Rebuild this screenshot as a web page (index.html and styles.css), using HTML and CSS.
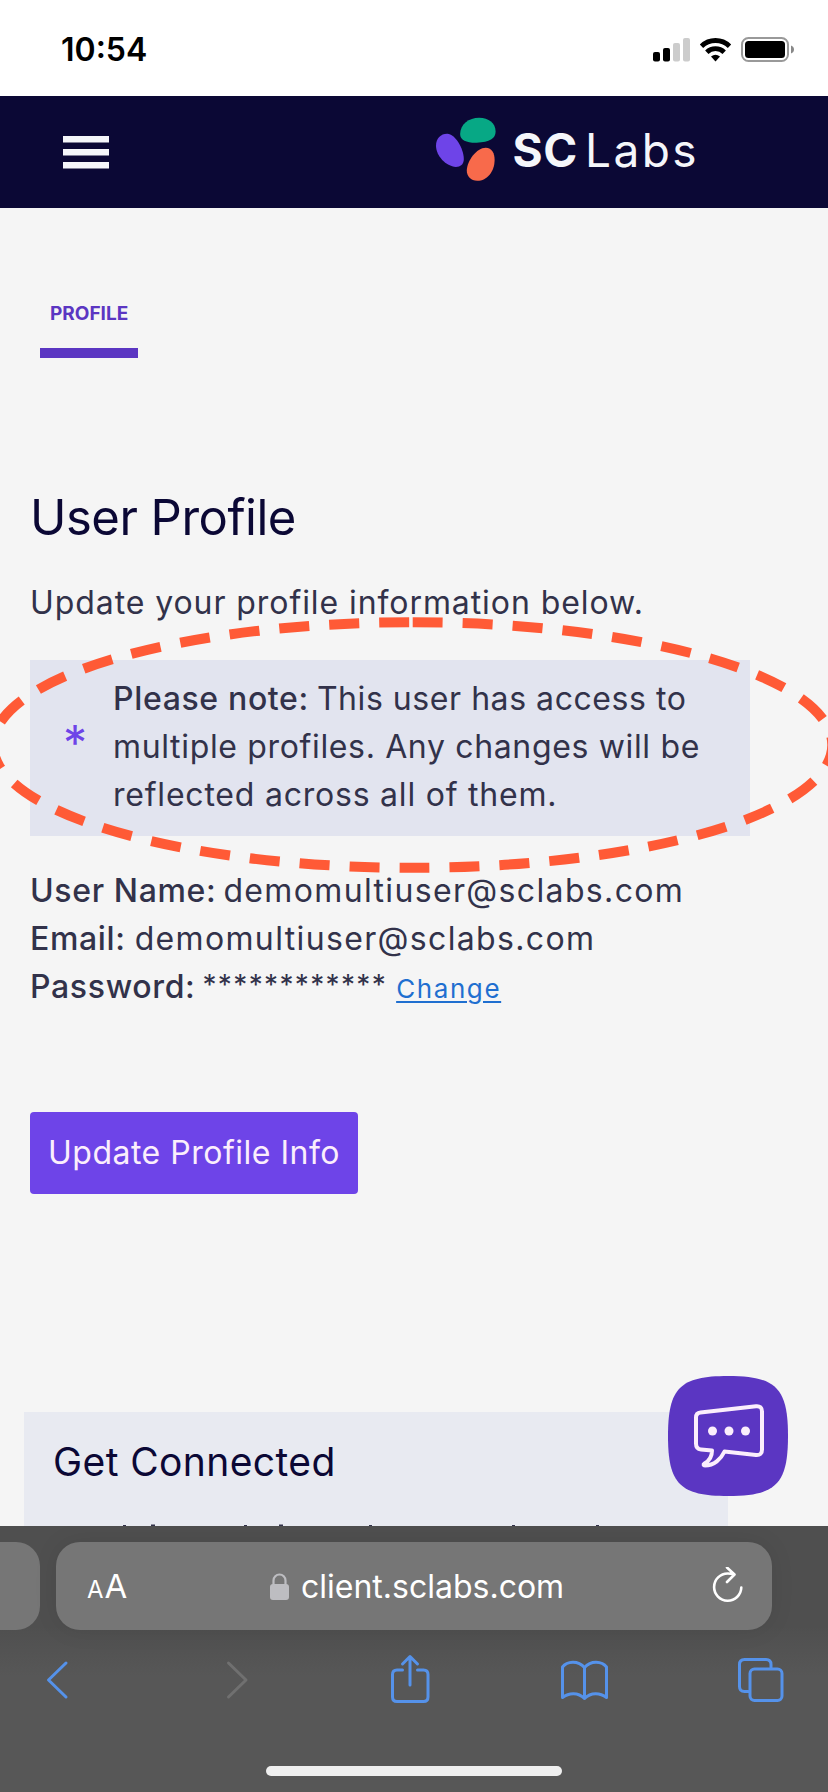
FILE: index.html
```html
<!DOCTYPE html>
<html lang="en">
<head>
<meta charset="utf-8">
<title>User Profile</title>
<link rel="stylesheet" href="styles.css">
</head>
<body>
<div class="screen">
  <header class="status">
    <span class="time">10:54</span>
    <svg class="status-icons" width="144" height="28" viewBox="652 36 144 28">
      <rect x="653" y="52" width="7" height="9.500" rx="2"/><rect x="663" y="48" width="7" height="13.500" rx="2"/>
      <rect x="673" y="43" width="7" height="18.500" rx="2" fill="#ccc"/><rect x="683" y="38" width="7" height="23.500" rx="2" fill="#ccc"/>
      <g fill="none" stroke="#000" stroke-width="4.800"><path d="M701.500 46.200a20 20 0 0 1 28 0"/><path d="M706.800 52.200a12.500 12.500 0 0 1 17.400 0"/></g>
      <path d="M711 56.500q4.500-3.600 9 0L715.500 61.500z"/>
      <rect x="742" y="38" width="46" height="23" rx="6.500" fill="none" stroke="#999" stroke-width="2"/>
      <rect x="745" y="41" width="40" height="17" rx="3.500"/>
      <path d="M791 45.500q3 1.200 3 4t-3 4z" fill="#888"/>
    </svg>
  </header>
  <nav class="topbar">
    <svg class="menu" width="46" height="34" viewBox="0 0 46 34" fill="#f5f6fa"><path d="M0 0h46v6.500H0zM0 13h46v6.500H0zM0 26h46v6.500H0z"/></svg>
    <div class="logo">
      <svg width="62" height="66" viewBox="434 116 62 66">
        <path fill="#07a885" d="M459.300 134C459.500 124 468 117.600 478.500 117.600C488 117.600 495 123 495 131.500C495 139 489 142 476 142.800C466 143 459.300 140.500 459.300 134z"/>
        <path fill="#6e44e8" d="M446.500 133.700C454 134 462.800 148 463 159C463 164.500 459.500 167 455 167C445 166.500 435 156 435 145.500C435 138.500 440 133.500 446.500 133.700z"/>
        <path fill="#f86a4b" d="M485 147.800C491.500 148 494 153.500 494 160C494 171.500 486.500 181 476.500 181C470 181 466 176.500 466 171C466 161 476 147.800 485 147.800z"/>
      </svg>
      <span class="logo-sc">SC</span><span class="logo-labs">Labs</span>
    </div>
  </nav>
  <main class="page">
    <div class="tab">PROFILE</div>
    <h1 class="title">User Profile</h1>
    <p class="line intro">Update your profile information below.</p>
    <section class="note">
      <span class="star">*</span>
      <div class="note-text">
        <p class="line"><b>Please note:</b><span class="tight">This user has access to</span></p>
        <p class="line">multiple profiles. Any changes will be</p>
        <p class="line loose">reflected across all of them.</p>
      </div>
    </section>
    <section class="details">
      <p class="line"><b>User Name:</b><span class="mail">demomultiuser@sclabs.com</span></p>
      <p class="line wide-gap"><b>Email:</b><span class="mail">demomultiuser@sclabs.com</span></p>
      <p class="line"><b>Password:</b><span class="mask">************</span><a class="change">Change</a></p>
    </section>
    <button class="update">Update Profile Info</button>
    <section class="card">
      <h2>Get Connected</h2>
      <svg class="clipped" width="600" height="2" viewBox="54 0 600 2" fill="#32324a"><path d="M124 1h3v1h-3zM152 .5h4V2h-4zM245 1h3v1h-3zM280 .5h4V2h-4zM370 1h3v1h-3zM513 1h3v1h-3zM597 1h3v1h-3z"/></svg>
    </section>
    <svg class="callout" width="828" height="270" viewBox="0 610 828 270">
      <path d="M412.700 622.200A419.600 122.800 0 0 1 412.700 867.800A419.600 122.800 0 0 1 412.700 622.200" fill="none" stroke="#ff5a36" stroke-width="10" stroke-dasharray="30 20"/>
    </svg>
    <svg class="chat" width="120" height="120" viewBox="0 0 120 120">
      <path fill="#5b36c2" d="M60 0C108 0 120 12 120 60C120 108 108 120 60 120C12 120 0 108 0 60C0 12 12 0 60 0z"/>
      <path fill="none" stroke="#fbeefc" stroke-width="4" stroke-linejoin="round" d="M32.500 36.500L88 30.300Q94 29.700 94 35.500V73.500Q94 79.500 88 79L56.500 75.500C53 83 46 89.500 37 89.500C35.500 89.500 35 88.500 36.500 87.500C42 84.500 44 80 44 74.500L33 73.500Q28 73 28 67.500V41.500Q28 37 32.500 36.500z"/>
      <g fill="#fbeefc"><circle cx="44.500" cy="55" r="4.500"/><circle cx="61" cy="55" r="4.500"/><circle cx="77.500" cy="55" r="4.500"/></g>
    </svg>
  </main>
  <footer class="browser">
    <div class="address-row">
      <div class="prev-tab"></div>
      <div class="address">
        <span class="aa"><small>A</small>A</span>
        <span class="url">
          <svg width="19" height="27" viewBox="0 0 19 27"><rect x="0" y="11" width="19" height="16" rx="3" fill="#bdbdc1"/><path d="M3.500 12V7.500a6 6 0 0 1 12 0V12" fill="none" stroke="#bdbdc1" stroke-width="2.200"/></svg>
          client.sclabs.com
        </span>
        <svg class="reload" width="32" height="38" viewBox="712 1567 32 38" fill="none" stroke="#fff" stroke-width="2.600" stroke-linecap="round" stroke-linejoin="round"><path d="M741.300 1587.500A13.600 13.600 0 1 1 727.700 1573.500Q731 1573.500 734 1574.500M727 1567.500L734.500 1574.500L727 1582"/></svg>
      </div>
    </div>
    <div class="tools">
      <svg width="828" height="56" viewBox="0 1650 828 56" fill="none" stroke="#5592ea" stroke-width="3" stroke-linecap="round" stroke-linejoin="round">
        <path d="M66 1663L48.500 1680L66 1697"/>
        <path d="M228.500 1663L246 1680L228.500 1697" stroke="#707070"/>
        <path d="M402.500 1670H397Q392.500 1670 392.500 1674.500V1697Q392.500 1701.500 397 1701.500H423.500Q428 1701.500 428 1697V1674.500Q428 1670 423.500 1670H417.500M410 1685V1657M402.500 1664L410 1656.500L417.500 1664" />
        <path d="M584.500 1667.500C578 1660 567 1661 562.500 1667V1697.500C569 1692.500 578 1692 584.500 1698.500C591 1692 600 1692.500 606.500 1697.500V1667C602 1661 591 1660 584.500 1667.500zM584.500 1667.500V1698.500"/>
        <rect x="750" y="1669" width="32" height="31.500" rx="4.500"/>
        <path d="M748.500 1691.500H744.500Q739.500 1691.500 739.500 1686.500V1664.500Q739.500 1659.500 744.500 1659.500H766Q771 1659.500 771 1664.500V1667.500"/>
      </svg>
    </div>
    <div class="home"></div>
  </footer>
</div>
</body>
</html>
```
FILE: styles.css
```css
*{box-sizing:border-box;margin:0;padding:0}
svg{display:block}
body{background:#f5f5f5;font-family:Inter,sans-serif;color:#32324a}
.screen{width:828px;height:1792px;overflow:hidden;display:flex;flex-direction:column}
.status{height:96px;background:#fff;display:flex;justify-content:space-between;padding:36px 32px 0 61px}
.time{font-size:32px;line-height:28px;font-weight:600;color:#000}
.topbar{height:112px;background:#0b0835;display:flex;justify-content:space-between;padding:20px 129px 0 63px}
.menu{margin-top:20px}
.logo{display:flex;width:265px;color:#f5f6fa;font-size:46px;line-height:56px;padding-left:1px;white-space:nowrap}
.logo-sc{font-weight:700;margin:6px 0 0 16px;letter-spacing:.5px;width:73px}
.logo-labs{margin-top:6px;letter-spacing:2.4px}
.page{position:relative;height:1318px;overflow:hidden;padding-left:30px}
.tab{width:98px;height:57px;margin:93px 0 0 10px;padding-left:10px;border-bottom:10px solid #5b36c2;color:#5b36c2;font-size:19px;line-height:25px;font-weight:700}
.title{margin-top:131px;font-size:49px;font-weight:400;line-height:58px;letter-spacing:-.5px;color:#0b0835}
.line{display:flex;align-items:baseline;height:48px;font-size:32px;line-height:48px;letter-spacing:.65px;gap:8px;white-space:nowrap}
.line b{font-weight:500}
.intro{margin-top:32px;letter-spacing:.92px}
.tight{letter-spacing:.55px}
.note{display:flex;width:720px;height:176px;margin-top:33px;padding-top:15px;background:#e2e4ef}
.note .loose{letter-spacing:.78px}
.star{width:83px;padding:38px 0 0 33px;font-size:48px;line-height:60px;color:#6e44e8}
.details{margin-top:31px}
.details .line{gap:7px}
.details .wide-gap{gap:9px}
.mail{letter-spacing:1.35px}
.mask{position:relative;top:-3px;font-size:28px;letter-spacing:1.36px}
.change{margin-left:2px;font-size:26px;letter-spacing:1.6px;color:#1f6fd0;text-decoration:underline;text-decoration-thickness:2px;text-underline-offset:3px}
.update{display:block;width:328px;height:82px;margin-top:101px;padding-bottom:2px;border:0;border-radius:4px;background:#6e44e8;color:#fbeefc;font-family:Inter,sans-serif;font-size:32px;letter-spacing:.5px;white-space:nowrap}
.card{width:704px;height:114px;margin:218px 0 0 -6px;padding:26px 0 0 29px;background:#e8eaf1}
.card h2{font-size:39px;line-height:48px;font-weight:400;letter-spacing:.4px;color:#0b0835}
.clipped{margin-top:38px}
.callout{position:absolute;left:0;top:402px}
.chat{position:absolute;left:668px;top:1168px}
.browser{height:266px;background:linear-gradient(#4f4f4f,#4f4f4f 100px,#575757 150px);padding-top:16px}
.address-row{display:flex;gap:16px}
.prev-tab{width:40px;height:88px;border-radius:0 24px 24px 0;background:#767676}
.address{display:flex;align-items:center;justify-content:space-between;width:716px;height:88px;padding:0 28px 0 31px;border-radius:24px;background:#767676;box-shadow:0 0 24px rgba(0,0,0,.08);color:#fff}
.aa{width:183px;font-size:33px}
.aa small{font-size:24px;margin-right:1px}
.url{display:flex;align-items:center;gap:12px;flex:1;font-size:32px;white-space:nowrap}
.tools{padding-top:20px}
.home{width:296px;height:10px;margin:60px 0 0 266px;border-radius:5px;background:#efefef}
```
